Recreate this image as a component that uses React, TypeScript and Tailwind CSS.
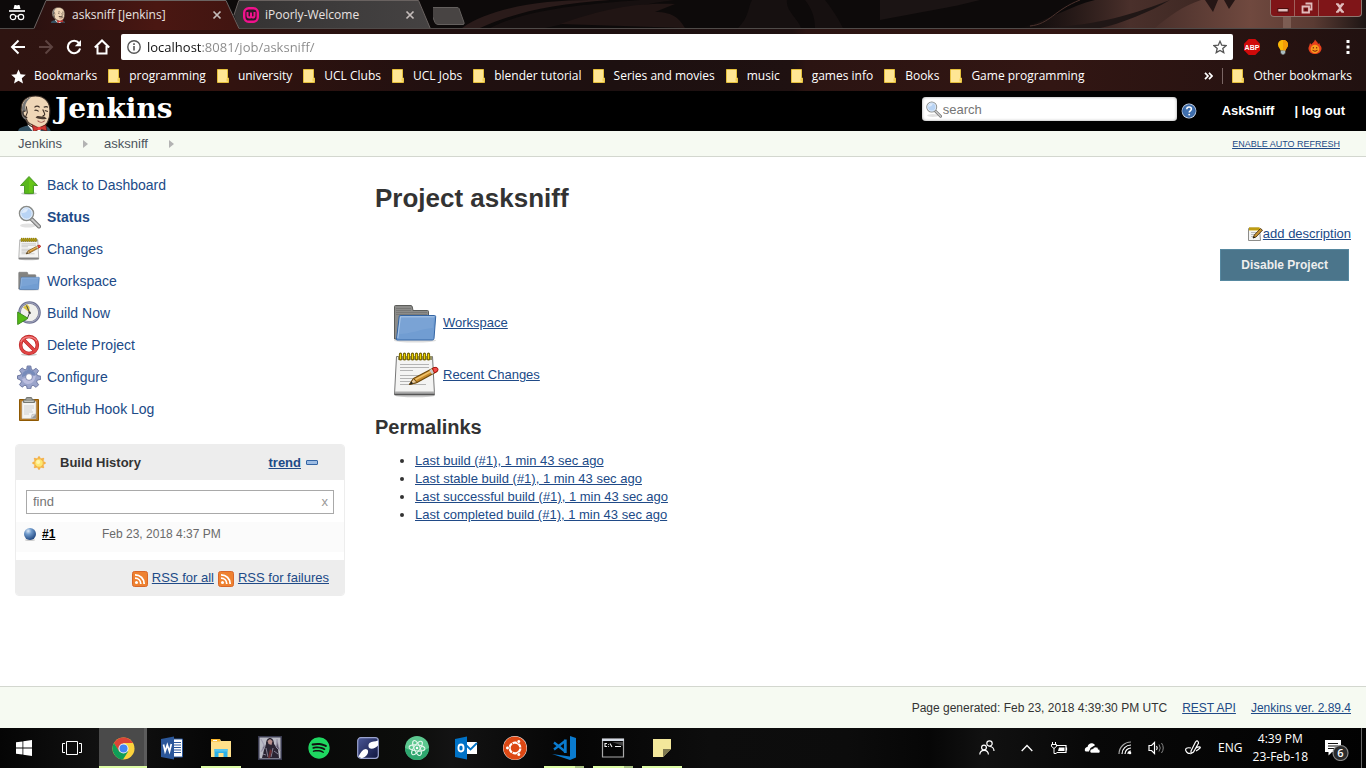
import React from "react";
import { FaSpotify, FaUbuntu } from "react-icons/fa";

const UI = "font-['Open_Sans','Noto_Sans',sans-serif]";

/* ---------- Jenkins page icons ---------- */

function Butler({ className }: { className: string }) {
  return (
    <svg viewBox="0 0 32 36" className={className} aria-hidden="true">
      <path d="M0 36c0-4 4-5 9-6l14-1c4 1 8 2 9 7z" fill="#335061" />
      <path d="M9 29l6 7h6l4-7z" fill="#fff" />
      <path d="M3 14C3 5 9 1 17 1c9 0 14 6 14 14 0 9-3 15-9 17-8 1-13-3-15-9-3-1-4-5-4-9z" fill="#efd6b7" stroke="#3b2e26" strokeWidth="1" />
      <path d="M4 15c-1-6 3-12 9-13-4 3-6 6-6 10l1 4c-2-1-3 1-2 3 0 2 2 3 3 3l-2 2c-3-2-4-5-3-9z" fill="#777" />
      <path d="M7 16c-2-1-3 0-2 3 1 2 2 3 4 3M8 11l1 6-2 5M8 23c1 3 3 5 6 6" fill="none" stroke="#3b2e26" strokeWidth="1" />
      <path d="M16 12c2-2 4-1 5 0M25 12c2-1 3-1 4 0M16 15c2-1 3 0 4 1M26 15l3 1M24 14c2 4 3 6 0 6" fill="none" stroke="#3b2e26" strokeWidth="1.1" />
      <path d="M17 22c2-3 4-1 6-1 2-1 3 0 5 2-3 1-8 1-11-1z" fill="#4a3a30" />
      <path d="M19 25c2 2 5 2 7 0" fill="none" stroke="#a0544d" strokeWidth="1" />
      <path d="M14 29l6 3 7-3 1 6-7-2-6 3z" fill="#d33833" stroke="#601310" strokeWidth=".7" />
      <path d="M19 31h3v3h-3z" fill="#ef3d3a" />
    </svg>
  );
}

function ArrowUp() {
  return (
    <svg viewBox="0 0 24 24" className="size-6" aria-hidden="true">
      <ellipse cx="12" cy="20.500" rx="8" ry="1.500" fill="#ccc" />
      <path d="M12 3.500L20.500 12.500H16.500V20.500H7.500V12.500H3.500Z" fill="#59b81c" stroke="#4e9a2a" strokeLinejoin="round" />
      <path d="M12 5l6.300 6.500h-2.800v8h-3.500z" fill="#73d216" opacity=".55" />
    </svg>
  );
}

function Magnifier({ className }: { className: string }) {
  return (
    <svg viewBox="0 0 24 24" className={className} aria-hidden="true">
      <ellipse cx="11" cy="20.500" rx="8" ry="2" fill="#e2e2e2" />
      <path d="M14.500 14l7.500 7.500" stroke="#777" strokeWidth="4" strokeLinecap="round" />
      <path d="M15 14.500l7 7" stroke="#c9c9c9" strokeWidth="2" strokeLinecap="round" />
      <circle cx="9.500" cy="8.500" r="7" fill="#a9c9ef" stroke="#8b8d89" strokeWidth="1.500" />
      <circle cx="9.500" cy="8.500" r="5.700" fill="#b9d4f4" stroke="#eef4fc" strokeWidth="1" />
      <path d="M5 8c0-3 3-5 6-4-1 3-3 4-6 4z" fill="#dfebfa" />
    </svg>
  );
}

function Notepad({ className }: { className: string }) {
  return (
    <svg viewBox="0 0 48 48" className={className} aria-hidden="true">
      <ellipse cx="24" cy="44.500" rx="20" ry="1.800" fill="#ccc" />
      <path d="M5.500 5.500h36l2 38h-40z" fill="#f4f4f3" stroke="#777" />
      <path d="M4 40.500h39.500v3H4z" fill="#aaa" />
      <path d="M3.500 43.500h40" stroke="#555" strokeWidth="1.400" />
      <path d="M7 5h34v4H7z" fill="#999567" />
      <path d="M9.500 3v5M13.500 3v5M17.500 3v5M21.500 3v5M25.500 3v5M29.500 3v5M33.500 3v5M37.500 3v5" stroke="#736000" strokeWidth="3.200" strokeLinecap="round" />
      <path d="M9.500 3.500v4M13.500 3.500v4M17.500 3.500v4M21.500 3.500v4M25.500 3.500v4M29.500 3.500v4M33.500 3.500v4M37.500 3.500v4" stroke="#edd400" strokeWidth="1.300" strokeLinecap="round" />
      <path d="M9 13.500h29M9 16.500h29M9 19.500h13M9 24.500h29M9 27.500h20M9 30.500h12M9 33.500h26" stroke="#b4b4b4" strokeWidth="1.200" />
      <g transform="translate(1.500 -1)">
        <path d="M17 34.500l4-6 20-10.500c3-1 5 1 3.500 3.500L24.500 32.500z" fill="#c98c2c" stroke="#6f4a0c" strokeWidth="1.200" strokeLinejoin="round" />
        <path d="M23 29.500l17-9" stroke="#efc26a" strokeWidth="1.600" />
        <path d="M17 34.500l4-6 3.500 4z" fill="#e9c99a" stroke="#6f4a0c" strokeWidth="1" />
        <path d="M17 34.500l2-3 1.600 2z" fill="#222" />
        <path d="M38 19.500l2.500 4" stroke="#ccc" strokeWidth="2.400" />
        <path d="M40 18.300c3-2 7-.5 5 2.700l-3 2z" fill="#ef4b4b" stroke="#a00" strokeWidth=".8" />
      </g>
    </svg>
  );
}

function SmallNotepad() {
  return (
    <svg viewBox="0 0 16 16" className="mt-px size-4" aria-hidden="true">
      <path d="M1.500 2.500h11l1 12h-12z" fill="#f3f3f3" stroke="#8d8d8a" />
      <path d="M2 1.500h11v3H2z" fill="#d9b21c" />
      <path d="M3 1v3M5 1v3M7 1v3M9 1v3M11 1v3" stroke="#8f7500" strokeWidth=".7" />
      <path d="M4 6.500h6M4 8.500h4M4 10.500h3" stroke="#bbb" />
      <path d="M6 12l1.300-3L13.500 2.500l2 1.700L9 11z" fill="#c99435" stroke="#4a3310" strokeWidth=".9" strokeLinejoin="round" />
      <path d="M6 12.300l1-2 1.200 1.200z" fill="#111" />
    </svg>
  );
}

function Folder({ className }: { className: string }) {
  return (
    <svg viewBox="0 0 48 48" className={className} aria-hidden="true">
      <ellipse cx="24" cy="41.500" rx="21" ry="2" fill="#ddd" />
      <path d="M3.500 40V7.500q0-1 1-1H20q1 0 1.300 1.500l.7 3.500h14.500q1 0 1 1V40z" fill="#8c8c8a" stroke="#5c5d5a" />
      <path d="M5 9.500h15M5 11.500h15M5 13.500h31M5 15.500h31" stroke="#787876" strokeWidth="1" />
      <path d="M5.500 40L8.200 17.500q0-1 1-1h34.300q1.200 0 1.200 1.200L43 39.500q-.2 1.500-1.700 1.500H6q-1 0-.5-1z" fill="#719dd2" stroke="#3465a4" />
      <path d="M9.500 18h33.500L41.800 29C30 30 20 35 7.800 35z" fill="#8fb3dd" opacity=".3" />
      <path d="M6.800 39L9.400 17.800h34" fill="none" stroke="#b7cfeb" strokeWidth=".9" />
    </svg>
  );
}

function BuildClock() {
  return (
    <svg viewBox="0 0 24 24" className="size-6" aria-hidden="true">
      <circle cx="12.500" cy="11.500" r="10" fill="#f0f0ec" stroke="#6f7392" strokeWidth="2.600" />
      <circle cx="12.500" cy="11.500" r="9.800" fill="none" stroke="#b4b7cb" strokeWidth=".8" />
      <path d="M12.500 11.500L6 6.500l4-3.500 2.500 3z" fill="#dcc443" />
      <path d="M9.500 4.500l3 7 1.500 1M12.500 12l-2 5" stroke="#444" strokeWidth="1" fill="none" />
      <circle cx="12.500" cy="11.500" r="1.100" fill="#333" />
      <path d="M.7 11v12.500L11 17.300z" fill="#54bb14" stroke="#3f8b20" strokeWidth="1" strokeLinejoin="round" />
    </svg>
  );
}

function Prohibit() {
  return (
    <svg viewBox="0 0 24 24" className="size-6" aria-hidden="true">
      <ellipse cx="12" cy="21.500" rx="8" ry="1.500" fill="#ccc" />
      <circle cx="12" cy="12" r="8.400" fill="#fff" stroke="#b92222" strokeWidth="3.500" />
      <circle cx="12" cy="12" r="8.400" fill="none" stroke="#e14545" strokeWidth="2.300" />
      <path d="M7 7l10 10" stroke="#b92222" strokeWidth="3.400" />
      <path d="M6.300 6.300l11.400 11.400" stroke="#e14545" strokeWidth="2.200" />
      <path d="M3.800 9c1.200-3 4-5 8.200-5 3 0 6 1 8 4" fill="none" stroke="#f18a8a" strokeWidth="1.200" />
    </svg>
  );
}

function Gear() {
  return (
    <svg viewBox="0 0 24 24" className="size-6" aria-hidden="true">
      <path d="M10.200 1h3.600l.6 3.500 1.700.8 3-2 2.500 2.500-2 3 .8 1.800 3.300.6v3.200l-3.300.7-.8 1.800 2 2.900-2.500 2.500-3-2-1.700.8-.6 2.700h-3.600l-.6-2.900-1.700-.7-2.900 2-2.500-2.500 2-2.900-.8-1.700L.5 13.800v-3l3.200-.7.800-1.800-2-2.900L5 2.900l3 2 1.700-.7z" fill="#9aa4cb" stroke="#65719c" strokeWidth=".9" strokeLinejoin="round" />
      <path d="M10.800 2h2.400l.5 3.300C17 6 18.500 8 19 11c-5-2-9-1-14 1C5 8 7 6 10.300 5.300z" fill="#6b83b4" opacity=".75" />
      <path d="M5 14c4-2 9-1 14-4-1 6-4 9-8 9-3 0-5-2-6-5z" fill="#c3c4e4" opacity=".8" />
      <circle cx="12" cy="12" r="3.400" fill="#fff" stroke="#6c76a4" strokeWidth=".8" />
    </svg>
  );
}

function Clipboard() {
  return (
    <svg viewBox="0 0 24 24" className="size-6" aria-hidden="true">
      <path d="M2.500 2.500h19v21h-19z" fill="#b57a28" stroke="#8f5902" />
      <path d="M5 4.500h14v17H5z" fill="#f4f4f4" stroke="#c8c8c8" strokeWidth=".6" />
      <path d="M7 9h10M7 11h10M7 13h8M7 15h9M7 17h5" stroke="#cfcfcf" strokeWidth="1.200" />
      <path d="M19 17l-5 4.500h5z" fill="#999" />
      <path d="M14 21.500l1-4 4-.5z" fill="#ddd" stroke="#aaa" strokeWidth=".5" />
      <path d="M6.500 5.500V3.500q0-1 1-1H9V1.500q0-1 1-1h4q1 0 1 1v1h1.500q1 0 1 1v2z" fill="#9a9c97" stroke="#6d6f6a" strokeWidth=".9" />
      <path d="M7.500 4.500h9" stroke="#cfd0cd" strokeWidth=".8" />
    </svg>
  );
}

function Sun() {
  const rays = [0, 45, 90, 135, 180, 225, 270, 315];
  return (
    <svg viewBox="0 0 16 16" className="size-4" aria-hidden="true">
      {rays.map((a) => (
        <path key={a} d="M6.300 3.500L8 1l1.700 2.500z" fill="#f9b13a" stroke="#efa33a" strokeWidth=".3" transform={`rotate(${a} 8 8)`} />
      ))}
      <circle cx="8" cy="8" r="4.300" fill="#fde873" stroke="#f5b03e" />
      <circle cx="7.200" cy="7" r="2" fill="#fff6b0" />
    </svg>
  );
}

function BlueBall() {
  return (
    <svg viewBox="0 0 16 16" className="size-4" aria-hidden="true">
      <defs>
        <radialGradient id="ball" cx=".35" cy=".25" r=".8">
          <stop offset="0" stopColor="#dce8f6" />
          <stop offset=".35" stopColor="#6f9acb" />
          <stop offset="1" stopColor="#1c427c" />
        </radialGradient>
      </defs>
      <ellipse cx="8" cy="14" rx="5" ry="1" fill="#ccc" />
      <circle cx="8" cy="8" r="6" fill="url(#ball)" />
    </svg>
  );
}

function Rss() {
  return (
    <svg viewBox="0 0 16 16" className="mt-[2px] size-4" aria-hidden="true">
      <rect x=".5" y=".5" width="15" height="15" rx="2" fill="#ee8130" stroke="#d8672a" />
      <circle cx="4.500" cy="11.500" r="1.500" fill="#fff" />
      <path d="M3 7.200c3.300 0 5.800 2.500 5.800 5.800M3 3.800c5.200 0 9.200 4 9.200 9.200" fill="none" stroke="#fff" strokeWidth="1.800" />
    </svg>
  );
}

function HelpIcon() {
  return (
    <svg viewBox="0 0 16 16" className="size-4" aria-hidden="true">
      <circle cx="8" cy="8" r="7.400" fill="#d8e3f2" />
      <circle cx="8" cy="8" r="6.200" fill="#3f6fae" stroke="#2d5b9b" />
      <path d="M5.800 6.300c0-1.500 1-2.200 2.300-2.200s2.300.8 2.300 2c0 1.700-2.200 1.700-2.200 3.400" fill="none" stroke="#fff" strokeWidth="1.500" />
      <circle cx="8.200" cy="11.600" r=".95" fill="#fff" />
    </svg>
  );
}

/* ---------- Browser window ---------- */

function ThemeArt() {
  return (
    <svg viewBox="0 0 1366 91" preserveAspectRatio="none" className="pointer-events-none absolute inset-0 size-full" aria-hidden="true">
      <defs>
        <linearGradient id="bar" x1="0" x2="1" y1="0" y2="0">
          <stop offset="0" stopColor="#2e1411" />
          <stop offset=".17" stopColor="#32130f" />
          <stop offset=".32" stopColor="#211010" />
          <stop offset=".45" stopColor="#1d1010" />
          <stop offset=".58" stopColor="#1f1111" />
          <stop offset=".59" stopColor="#2b1412" />
          <stop offset=".77" stopColor="#321613" />
          <stop offset="1" stopColor="#211110" />
        </linearGradient>
        <linearGradient id="glow" x1="0" x2="1" y1="0" y2="0">
          <stop offset="0" stopColor="#3a2522" stopOpacity="0" />
          <stop offset=".5" stopColor="#4a302b" />
          <stop offset="1" stopColor="#38241f" />
        </linearGradient>
        <linearGradient id="glow2" x1="0" x2="1" y1="0" y2="0">
          <stop offset="0" stopColor="#4a302b" />
          <stop offset=".45" stopColor="#70493f" />
          <stop offset=".75" stopColor="#5a3b33" />
          <stop offset="1" stopColor="#1d1514" />
        </linearGradient>
      </defs>
      <path d="M0 0h1366v91H0z" fill="url(#bar)" />
      <path d="M0 0h1366v28H0z" fill="#0d0a0a" />
      <path d="M462 28C490 8 540 0 590 0h20c-60 4-100 14-130 28z" fill="#2a1b1a" />
      <path d="M490 28C530 8 590 4 640 0h35c-50 6-90 20-130 28z" fill="#171010" />
      <path d="M560 24c35-12 70-22 115-20l-20 8c20 0 25 8 30 16z" fill="#211514" />
      <path d="M738 28c12-12 10-22 14-28h35c-2 10 12 20 14 28zM815 28c0-12-4-20-10-28h20c8 10 14 20 18 28z" fill="#161010" />
      <path d="M880 0h100c-30 8-60 12-100 20z" fill="#1b1414" />
      <path d="M1020 28c30-8 50-22 75-28h145c-30 8-60 12-80 28z" fill="url(#glow)" />
      <path d="M1155 28c14-12 28-22 46-28h165v28z" fill="url(#glow2)" />
      <path d="M1040 28c50-2 84-10 130-28-20 12-50 24-70 28z" fill="#201716" />
      <path d="M1030 26c20-2 24-16 50-26" stroke="#4c322d" fill="none" />
      <path d="M1205 0l8 12 5-12zM1224 0l5 9 6-9z" fill="#251615" />
      <path d="M1283 17h8v11h-8z" fill="#87695f" opacity=".7" />
      <path d="M0 28.500h1366" stroke="#4f4b49" />
    </svg>
  );
}

type TabProps = { title: string; active?: boolean; icon: React.ReactNode; className: string };

function Tab({ title, active, icon, className }: TabProps) {
  return (
    <div className={`relative flex h-[30px] items-center pr-[15px] ${className}`}>
      <svg viewBox="0 0 207 30" preserveAspectRatio="none" className="absolute inset-0 size-full" aria-hidden="true">
        <defs>
          <linearGradient id="tabOn" x1="0" x2="1">
            <stop offset="0" stopColor="#2a1110" />
            <stop offset=".6" stopColor="#4a1712" />
            <stop offset="1" stopColor="#411511" />
          </linearGradient>
          <linearGradient id="tabOff" x1="0" x2="1">
            <stop offset="0" stopColor="#343232" />
            <stop offset=".6" stopColor="#3f3d3d" />
            <stop offset="1" stopColor="#454242" />
          </linearGradient>
        </defs>
        <path d={active ? "M0 30L1 28 13 1H193L206 28V30Z" : "M6 28L1 15 6 1H192L204 28Z"} fill={active ? "url(#tabOn)" : "url(#tabOff)"} />
        <path d={active ? "M1 28.500L13 .5H193L206 28.500" : "M1 15L6 .5H192L204 28"} fill="none" stroke="#6b6462" />
      </svg>
      <span className="relative flex size-4 shrink-0 items-center justify-center">{icon}</span>
      <span className="relative ml-[6px] min-w-0 grow truncate text-xs text-[#e8e2e0]">{title}</span>
      <button aria-label={`Close ${title}`} className="relative flex size-4 items-center justify-center">
        <svg viewBox="0 0 10 10" className="size-[10px]" aria-hidden="true">
          <path d="M1.500 1.500l7 7M8.500 1.500l-7 7" stroke="#c4bcba" strokeWidth="1.700" />
        </svg>
      </button>
    </div>
  );
}

function BookmarkFolder() {
  return (
    <svg viewBox="0 0 12 14" className="h-[14px] w-3 shrink-0" aria-hidden="true">
      <path d="M.5.500h10v8.500h1v4.500H.5z" fill="#ffe694" stroke="#e5c03c" />
      <path d="M9.500 9.500v3h2v-3z" fill="#f2cf52" />
    </svg>
  );
}

const bookmarks = ["programming", "university", "UCL Clubs", "UCL Jobs", "blender tutorial", "Series and movies", "music", "games info", "Books", "Game programming"];

function NavButton({ label, d, dim }: { label: string; d: string; dim?: boolean }) {
  return (
    <button aria-label={label} className="flex w-7 justify-center">
      <svg viewBox="0 0 16 16" className={dim ? "size-4 text-[#5d4340]" : "size-4 text-white"} aria-hidden="true">
        <path d={d} fill="none" stroke="currentColor" strokeWidth="2" />
      </svg>
    </button>
  );
}

function BrowserChrome() {
  return (
    <div className={`relative shrink-0 ${UI}`}>
      <ThemeArt />
      <div className="relative flex h-[30px]">
        <div className="flex w-[33px] shrink-0 justify-center pt-1">
          <svg viewBox="0 0 16 18" className="h-[18px] w-4" aria-hidden="true">
            <path d="M4.500 5L5.500 1h1.300L8 1.500 9.200 1h1.300l1 4z" fill="#fff" />
            <path d="M0 7h16" stroke="#fff" strokeWidth="1.600" />
            <circle cx="4" cy="13" r="2.700" fill="none" stroke="#fff" strokeWidth="1.200" />
            <circle cx="12" cy="13" r="2.700" fill="none" stroke="#fff" strokeWidth="1.200" />
            <path d="M6.500 12.500q1.500-1 3 0" stroke="#fff" fill="none" strokeWidth="1.100" />
          </svg>
        </div>
        <Tab active title="asksniff [Jenkins]" icon={<Butler className="size-4" />} className="z-10 w-[207px] pl-[17px]" />
        <Tab
          title="iPoorly-Welcome"
          className="-ml-[7px] w-[200px] pl-[10px]"
          icon={
            <svg viewBox="0 0 16 16" className="size-4" aria-hidden="true">
              <rect x="1.200" y="1.200" width="13.600" height="13.600" rx="4.500" fill="#2c1a26" stroke="#f0128c" strokeWidth="2.400" />
              <path d="M4.500 5v3.500q0 2 1.800 2T8 8.500V5.500M8 8.500q0 2 1.800 2t1.700-2V5" fill="none" stroke="#f0128c" strokeWidth="2" />
            </svg>
          }
        />
        <button aria-label="New tab" className="mt-[7px] h-[18px] w-9">
          <svg viewBox="0 0 36 18" className="h-[18px] w-9" aria-hidden="true">
            <path d="M-3 1q0-.5 1-.5H25q1.500 0 2 1l5 14q.5 2-1 2H6q-2 0-3-2z" transform="translate(-1)" fill="#484443" stroke="#64605e" />
          </svg>
        </button>
        <div className="mr-1 ml-auto flex h-[17px] rounded-b-sm border border-t-0 border-[#8d7770] bg-[#7f1518]">
          <button aria-label="Minimize" className="flex w-6 items-center justify-center border-r border-[#a0605c]">
            <svg viewBox="0 0 12 12" className="size-3" aria-hidden="true"><rect x=".8" y="6.500" width="10.400" height="3.500" fill="#e0bcbc" stroke="#4b0c0d" /></svg>
          </button>
          <button aria-label="Restore" className="flex w-6 items-center justify-center border-r border-[#a0605c]">
            <svg viewBox="0 0 12 12" className="size-3" aria-hidden="true">
              <path d="M4.500 1.500h6v6h-2M1.500 4.500h6.500v6H1.500z" fill="none" stroke="#e0bcbc" strokeWidth="1.800" />
              <path d="M3.700 6.700h2v2h-2z" fill="#4b0c0d" />
            </svg>
          </button>
          <button aria-label="Close window" className="flex w-[42px] items-center justify-center">
            <svg viewBox="0 0 12 12" className="size-3" aria-hidden="true"><path d="M2 2h2l2 2.500L8 2h2M2 10h2l2-2.500L8 10h2M3 2l6 8M9 2L3 10" stroke="#e0bcbc" strokeWidth="1.700" fill="none" /></svg>
          </button>
        </div>
      </div>

      <div className="relative flex h-[30px] items-center pt-1 pl-1">
        <NavButton label="Back" d="M15 8H2.500M8.500 1.500L2 8l6.500 6.500" />
        <NavButton label="Forward" dim d="M1 8h12.500M7.500 1.500L14 8l-6.500 6.500" />
        <button aria-label="Reload" className="flex w-7 justify-center">
          <svg viewBox="0 0 16 16" className="size-4" aria-hidden="true">
            <path d="M13 4.200A6.200 6.200 0 1 0 14.100 9.500" fill="none" stroke="#fff" strokeWidth="2.100" />
            <path d="M15 1v6.200H8.800z" fill="#fff" />
          </svg>
        </button>
        <NavButton label="Home" d="M.8 8.500L8 1.500l7.200 7M3.500 7v7.500h9V7" />
        <div className="ml-[5px] flex h-[26px] min-w-0 grow items-center rounded-xs bg-white px-[6px]">
          <svg viewBox="0 0 14 14" className="size-[14px] shrink-0" aria-hidden="true">
            <circle cx="7" cy="7" r="6.200" fill="none" stroke="#555" strokeWidth="1.400" />
            <path d="M7 6v4.500M7 3.300v1.600" stroke="#555" strokeWidth="1.600" />
          </svg>
          <input
            aria-label="Address"
            defaultValue="localhost:8081/job/asksniff/"
            className="ml-[6px] h-6 min-w-0 grow bg-[linear-gradient(90deg,#111_54px,#888_54px)] bg-clip-text text-[13px] text-transparent outline-none"
          />
          <svg viewBox="0 0 16 16" className="size-[14px] shrink-0" aria-hidden="true">
            <path d="M8 1.500l2 4.500 4.900.4-3.700 3.200 1.100 4.800L8 11.900l-4.300 2.500 1.100-4.800L1.100 6.400 6 6z" fill="none" stroke="#555" strokeWidth="1.500" />
          </svg>
        </div>
        <div className="flex shrink-0 items-center">
          <button aria-label="Adblock Plus" className="flex w-9 justify-center pl-[2px]">
            <svg viewBox="0 0 16 16" className="size-4" aria-hidden="true">
              <path d="M4.700 0h6.600L16 4.700v6.600L11.300 16H4.700L0 11.300V4.700z" fill="#d00a0a" />
              <text x="8" y="10.600" textAnchor="middle" fontSize="7" fontWeight="700" fill="#fff" fontFamily="Liberation Sans, sans-serif">ABP</text>
            </svg>
          </button>
          <button aria-label="Lightbulb" className="flex w-7 justify-center">
            <svg viewBox="0 0 16 16" className="size-4" aria-hidden="true">
              <path d="M8 1c3 0 5 2 5 4.700C13 8.500 11 9 10.500 11.500h-5C5 9 3 8.500 3 5.700 3 3 5 1 8 1z" fill="#fbb708" />
              <path d="M8 1c3 0 5 2 5 4.700C13 8.500 11 9 10.500 11.500H8z" fill="#f59d07" />
              <path d="M5.700 11.500h4.600v3H9.300v1H6.700v-1h-1z" fill="#a9bcc0" />
            </svg>
          </button>
          <button aria-label="Flame" className="flex w-9 justify-center">
            <svg viewBox="0 0 16 16" className="size-4" aria-hidden="true">
              <path d="M8 .5c1 2 3 2.500 3 4.500l1.500-1C12 6 15 7 14.500 10c-.5 3-3 5-6.500 5s-6-2-6.500-5C1.200 8 2.500 7 3 4l1.500 1.500C5 4 7.500 3 8 .5z" fill="#e8401c" />
              <circle cx="8" cy="10" r="4.300" fill="#f99b1d" />
              <path d="M6.300 8v1.500M9.700 8v1.500M5.500 11.300q2.500 2 5 0" stroke="#7d1b06" fill="none" />
            </svg>
          </button>
          <button aria-label="Menu" className="flex w-[33px] justify-center pr-[3px]">
            <svg viewBox="0 0 4 14" className="h-[14px] w-1" aria-hidden="true"><path d="M.5 0h3v3h-3zM.5 5.500h3v3h-3zM.5 11h3v3h-3z" fill="#fff" /></svg>
          </button>
        </div>
      </div>

      <nav aria-label="Bookmarks" className="relative flex h-[31px] items-center pt-px pr-[14px] pl-[11px] text-xs whitespace-nowrap text-white">
        <a href="#bookmarks" className="flex items-center gap-2">
          <svg viewBox="0 0 16 16" className="size-[15px]" aria-hidden="true"><path d="M8 .5l2.200 5.200 5.600.5-4.300 3.700 1.300 5.500L8 12.500l-4.800 2.900 1.300-5.500L.2 6.200l5.600-.5z" fill="#fff" /></svg>
          Bookmarks
        </a>
        {bookmarks.map((b) => (
          <a key={b} href="#folder" className="ml-[11px] flex items-center gap-[9px]">
            <BookmarkFolder />
            {b}
          </a>
        ))}
        <button aria-label="More bookmarks" className="ml-auto">
          <svg viewBox="0 0 9 8" className="h-2 w-[9px]" aria-hidden="true"><path d="M1 .8L4 4 1 7.200M5 .8L8 4 5 7.200" fill="none" stroke="#fff" strokeWidth="1.700" /></svg>
        </button>
        <span className="mx-[9px] h-4 w-px bg-[#7a6664]" />
        <a href="#other" className="flex items-center gap-[9px]">
          <BookmarkFolder />
          Other bookmarks
        </a>
      </nav>
    </div>
  );
}

/* ---------- Jenkins page ---------- */

const link = "text-[#204a87] underline";

const tasks: { label: string; icon: React.ReactNode }[] = [
  { label: "Back to Dashboard", icon: <ArrowUp /> },
  { label: "Status", icon: <Magnifier className="size-6" /> },
  { label: "Changes", icon: <Notepad className="size-6" /> },
  { label: "Workspace", icon: <Folder className="size-6" /> },
  { label: "Build Now", icon: <BuildClock /> },
  { label: "Delete Project", icon: <Prohibit /> },
  { label: "Configure", icon: <Gear /> },
  { label: "GitHub Hook Log", icon: <Clipboard /> },
];

const permalinks = [
  "Last build (#1), 1 min 43 sec ago",
  "Last stable build (#1), 1 min 43 sec ago",
  "Last successful build (#1), 1 min 43 sec ago",
  "Last completed build (#1), 1 min 43 sec ago",
];

function JenkinsHeader() {
  return (
    <header className="flex h-10 shrink-0 items-center bg-black pr-[21px] pl-[18px] text-[13px] font-bold text-white">
      <a href="#home" className="flex h-10 items-start overflow-hidden">
        <Butler className="mt-1 h-[37px] w-[33px]" />
        <span className="ml-1 font-['DejaVu_Serif',serif] text-[28px] leading-9">Jenkins</span>
      </a>
      <div className="mb-1 ml-auto flex h-6 w-[255px] items-center rounded-sm bg-white pl-[3px] shadow-[inset_0_0_3px_#999]">
        <Magnifier className="size-[17px]" />
        <input aria-label="Search" placeholder="search" className="ml-px h-6 min-w-0 grow font-normal text-[#333] outline-none placeholder:text-[#757575]" />
      </div>
      <a href="#help" aria-label="Help" className="ml-1"><HelpIcon /></a>
      <a href="#user" className="ml-[25px]">AskSniff</a>
      <span className="ml-5">| <a href="#logout">log out</a></span>
    </header>
  );
}

function Crumb({ children }: { children: string }) {
  return (
    <li className="flex items-center">
      <a href="#crumb" className="text-[#4d545d]">{children}</a>
      <svg viewBox="0 0 5 8" className="mr-4 ml-[21px] h-2 w-[5px]" aria-hidden="true"><path d="M0 0l5 4-5 4z" fill="#b3b3b3" /></svg>
    </li>
  );
}

function Sidebar() {
  return (
    <aside className="w-[330px] shrink-0 pt-3">
      <ul>
        {tasks.map((t) => (
          <li key={t.label} className="flex h-8 items-center gap-[6px] pl-[2px]">
            {t.icon}
            <a href="#task" className={t.label === "Status" ? "text-sm font-bold text-[#204a87]" : "text-sm text-[#204a87]"}>{t.label}</a>
          </li>
        ))}
      </ul>
      <section className="mt-[19px] overflow-hidden rounded-[4px] border border-[#ededed]">
        <div className="flex h-[35px] items-center bg-[#ededed] pr-[26px] pl-[15px] font-bold">
          <Sun />
          <h2 className="ml-[13px]">Build History</h2>
          <a href="#trend" className={`ml-auto ${link}`}>trend</a>
          <button aria-label="Collapse" className="ml-[5px] h-[5px] w-3 rounded-[1px] border border-[#3465a4] bg-[#9dbce3]" />
        </div>
        <div className="mx-[10px] mt-[10px] flex h-6 items-center border border-[#a9a9a9] pr-[5px] pl-[6px]">
          <input aria-label="Find builds" placeholder="find" className="min-w-0 grow outline-none placeholder:text-[#757575]" />
          <button aria-label="Clear" className="text-[#999]">x</button>
        </div>
        <table className="mt-2 mb-2 w-full bg-[#fbfbfb] text-xs">
          <tbody>
            <tr className="h-[30px] align-top">
              <td className="w-[86px] pt-1 pl-[6px]">
                <div className="flex items-center gap-1"><BlueBall /><a href="#build" className="font-bold text-black underline">#1</a></div>
              </td>
              <td className="pt-1 text-[#6a6a6a]">Feb 23, 2018 4:37 PM</td>
            </tr>
          </tbody>
        </table>
        <div className="flex h-[35px] items-center justify-end gap-1 bg-[#ededed] pr-[15px]">
          <Rss /><a href="#rss" className={link}>RSS for all</a>
          <Rss /><a href="#rssf" className={link}>RSS for failures</a>
        </div>
      </section>
    </aside>
  );
}

function Main() {
  return (
    <main className="min-w-0 grow pt-[26px]">
      <h1 className="text-[26px] leading-[30px] font-bold">Project asksniff</h1>
      <div className="mt-3 flex justify-end">
        <SmallNotepad />
        <a href="#describe" className={link}>add description</a>
      </div>
      <div className="mt-[6px] flex justify-end pr-[2px]">
        <button className="h-8 border border-[#5688a0] bg-[#4b758b] px-5 text-xs font-bold text-[#eee]">Disable Project</button>
      </div>
      <ul className="mt-4 ml-4">
        <li className="flex h-[52px] items-center gap-1"><Folder className="size-12" /><a href="#ws" className={link}>Workspace</a></li>
        <li className="flex h-[52px] items-center gap-1"><Notepad className="size-12" /><a href="#changes" className={link}>Recent Changes</a></li>
      </ul>
      <h2 className="mt-[14px] text-xl leading-6 font-bold">Permalinks</h2>
      <ul className="mt-[13px] list-disc pl-10">
        {permalinks.map((p) => (
          <li key={p}><a href="#permalink" className={link}>{p}</a></li>
        ))}
      </ul>
    </main>
  );
}

/* ---------- Taskbar ---------- */

type TaskButtonProps = { label: string; active?: boolean; open?: boolean; stacked?: boolean; children: React.ReactNode };

function TaskButton({ label, active, open, stacked, children }: TaskButtonProps) {
  return (
    <button aria-label={label} className={`relative flex h-10 w-12 shrink-0 items-center justify-center ${active ? "border-r-[3px] border-[#5c5c5c] bg-[#4a4a4a] pl-[3px]" : ""}`}>
      {children}
      {active && <span className="absolute bottom-0 left-0 h-[2px] w-12 bg-[#dcfba4]" />}
      {open && (
        <span className="absolute bottom-0 flex h-[2px] w-10 justify-end bg-[#dcfba4]">
          {stacked && <span className="h-[2px] w-[9px] bg-[#a6bf80]" />}
        </span>
      )}
    </button>
  );
}

function Taskbar() {
  return (
    <footer className={`flex h-10 shrink-0 items-center bg-[linear-gradient(90deg,#050505,#121212_8%,#060606_16%,#0c0d0b_30%,#131313_33%,#050505_42%,#0d0d0d_52%,#0c0c0c_62%,#060606_68%,#111_72%,#080808_80%,#020202)] text-white ${UI}`}>
      <TaskButton label="Start">
        <svg viewBox="0 0 16 16" className="size-4" aria-hidden="true"><path d="M0 2.300L6.500 1.400v6.200H0zM7.300 1.300L16 0v7.600H7.300zM0 8.400h6.500v6.200L0 13.700zM7.300 8.400H16V16l-8.700-1.300z" fill="#fff" /></svg>
      </TaskButton>
      <TaskButton label="Task view">
        <svg viewBox="0 0 20 14" className="h-[14px] w-5" aria-hidden="true"><path d="M4.500.5h11v13h-11zM3 2.500H.5v9H3M17 2.500h2.500v9H17" fill="none" stroke="#fff" /></svg>
      </TaskButton>
      <div className="ml-[3px] flex gap-px">
        <TaskButton label="Chrome" active>
          <svg viewBox="0 0 24 24" className="size-[23px]" aria-hidden="true">
            <circle cx="12" cy="12" r="11.500" fill="#fbd23c" />
            <path d="M2 6.300A11.500 11.500 0 0 1 22 6.300H12L7 15z" fill="#db4437" />
            <path d="M2 6.300A11.500 11.500 0 0 0 11.500 23.500L17 14.800 7.500 15z" fill="#0f9d58" />
            <circle cx="12" cy="12" r="5.300" fill="#f1f1f1" /><circle cx="12" cy="12" r="4.200" fill="#4285f4" />
          </svg>
        </TaskButton>
        <TaskButton label="Word">
          <svg viewBox="0 0 24 24" className="size-6" aria-hidden="true">
            <path d="M11 3h11.500v18H11z" fill="#fff" stroke="#2b579a" />
            <path d="M14 6.500h7M14 9h7M14 11.500h7M14 14h7M14 16.500h7" stroke="#2b579a" strokeWidth="1.200" />
            <path d="M1 3l13-2.500v23L1 21z" fill="#2b579a" />
            <path d="M3.500 8.500l1.600 7 2.200-6.500 2.200 6.500 1.800-7.500" fill="none" stroke="#fff" strokeWidth="1.700" />
          </svg>
        </TaskButton>
        <TaskButton label="File Explorer" open>
          <svg viewBox="0 0 24 24" className="size-6" aria-hidden="true">
            <path d="M2 3h9l1 2h10v16H2z" fill="#ffe08a" /><path d="M2 3h9v2.500H2z" fill="#f8b62d" /><path d="M4 4h4v1H4z" fill="#fff" />
            <path d="M5.500 21v-8h13v8h-4v-4h-5v4z" fill="#2cb1e8" />
            <path d="M5.500 13h13v2.500h-13z" fill="#52c4f0" />
          </svg>
        </TaskButton>
        <TaskButton label="Game">
          <svg viewBox="0 0 24 24" className="size-6" aria-hidden="true">
            <path d="M0 0h24v24H0z" fill="#38394d" /><path d="M1.500 1.500h21v21h-21z" fill="#b9bac4" />
            <path d="M8 8c0-4 2-6 4-6s4 2 4 6l4 5 1 9H4l2-8z" fill="#2a2432" />
            <path d="M9.500 5l2.500-2 2.500 2-1 4-3-1z" fill="#b68e8b" />
            <path d="M3 3l3 6-3 7 4-5zM19 3l1 5 2 7-4-4zM8 12l2 9M15 12l-2 9M5 18l3 1M16 15l4 3" fill="#5d586c" stroke="#a09cae" strokeWidth=".8" />
            <path d="M12 13l2 2-2 7h-2z" fill="#6d3034" />
          </svg>
        </TaskButton>
        <TaskButton label="Spotify"><FaSpotify className="size-[22px] rounded-full bg-[#111] text-[#1ed760]" /></TaskButton>
        <TaskButton label="Remote tool">
          <svg viewBox="0 0 22 22" className="size-[22px]" aria-hidden="true">
            <defs><linearGradient id="navy" x1="0" y1="0" x2="1" y2="1"><stop offset="0" stopColor="#4a5796" /><stop offset="1" stopColor="#10163f" /></linearGradient></defs>
            <rect x=".7" y=".7" width="20.600" height="20.600" rx="3" fill="url(#navy)" stroke="#9ba4cf" strokeWidth="1.200" />
            <path d="M21 3.500v5c-2 2.500-5 3.500-8 3-2-1-2-4-.5-5.500C15 4 18 5 21 3.500zM1.500 19.500c2-4 4-7 7-7.500 3 0 3 3 2 5-1.500 2.500-4 4-6 4.200z" fill="#fff" />
          </svg>
        </TaskButton>
        <TaskButton label="Atom">
          <svg viewBox="0 0 24 24" className="size-6" aria-hidden="true">
            <circle cx="12" cy="12" r="12" fill="#5cc78f" /><path d="M0 12a12 12 0 0 0 24 0c-8 4-16 4-24 0z" fill="#2ea66e" />
            <g fill="none" stroke="#e4f6ec" strokeWidth="1">
              <ellipse cx="12" cy="12" rx="3" ry="8" transform="rotate(-24 12 12)" />
              <ellipse cx="12" cy="12" rx="3" ry="8" transform="rotate(36 12 12)" />
              <ellipse cx="12" cy="12" rx="3" ry="8" transform="rotate(96 12 12)" />
            </g>
            <circle cx="12" cy="12" r="1.200" fill="#fff" />
          </svg>
        </TaskButton>
        <TaskButton label="Outlook">
          <svg viewBox="0 0 24 24" className="size-6" aria-hidden="true">
            <path d="M12 6h11v12H12z" fill="#fff" /><path d="M12.500 9.500l4 4L23 7" fill="none" stroke="#0072c6" strokeWidth="1.800" />
            <path d="M1 3l12-2.500v23L1 21z" fill="#0072c6" />
            <ellipse cx="7" cy="12" rx="2.600" ry="3.500" fill="none" stroke="#fff" strokeWidth="1.800" />
          </svg>
        </TaskButton>
        <TaskButton label="Ubuntu"><span className="flex size-6 items-center justify-center rounded-full bg-white"><FaUbuntu className="size-6 text-[#dd4814]" /></span></TaskButton>
        <TaskButton label="Visual Studio Code" open stacked>
          <svg viewBox="0 0 24 24" className="size-6" aria-hidden="true">
            <path d="M18 0l6 2v19.500L18 24z" fill="#0a7bcf" />
            <path d="M0 18l18 2.500V24z" fill="#0a7bcf" />
            <path d="M2 6.500l10.500 8.500M2 13.500L12.500 5.500" stroke="#0a7bcf" strokeWidth="2.300" fill="none" />
            <path d="M13.300 3.500v13.500" stroke="#0a7bcf" strokeWidth="2.800" />
          </svg>
        </TaskButton>
        <TaskButton label="Command prompt" open stacked>
          <svg viewBox="0 0 24 20" className="h-5 w-6" aria-hidden="true">
            <path d="M1.500 1h21v18h-21z" fill="#050505" stroke="#a9a9a9" strokeWidth="1.200" /><path d="M1 .7h22V3H1z" fill="#d5dbe5" />
            <path d="M11 4h11v4z" fill="#444" />
            <path d="M6 5.500H4v3h2M7.500 6v.8M7.500 8v.8M9 5.500l2 3.500M14 8.500h6" fill="none" stroke="#eee" strokeWidth="1.100" />
          </svg>
        </TaskButton>
        <TaskButton label="Sticky Notes" open>
          <svg viewBox="0 0 18 18" className="size-[18px]" aria-hidden="true"><path d="M0 0h18v10l-8 8H0z" fill="#f3e79b" /><path d="M10 10h8l-8 8z" fill="#7d774f" /></svg>
        </TaskButton>
      </div>

      <div className="ml-auto flex h-10 items-center text-xs">
        <svg viewBox="0 0 16 16" className="size-4" aria-hidden="true"><g fill="none" stroke="#fff" strokeWidth="1.200"><circle cx="10.500" cy="3.500" r="2.700" /><path d="M15 11c0-3-2-4.500-4.500-4.500" /><circle cx="5" cy="7.500" r="2.400" /><path d="M.8 14.500c.2-5.500 8.400-5.500 8.600 0" /></g></svg>
        <svg viewBox="0 0 12 8" className="ml-[26px] h-2 w-3" aria-hidden="true"><path d="M.7 7L6 1.500 11.300 7" fill="none" stroke="#fff" strokeWidth="1.300" /></svg>
        <svg viewBox="0 0 17 14" className="ml-[18px] h-[14px] w-[17px]" aria-hidden="true"><path d="M5 4.500h10v7H5.500M15.500 6.500v3" fill="none" stroke="#fff" strokeWidth="1.200" /><path d="M8 6.500h5.500v3.500H7z" fill="#fff" /><path d="M1.500 1v2M4.500 1v2M.5 3.500h5v2L3.500 7h-1L.5 5.500zM3 7v5.500h2.500" fill="none" stroke="#fff" /></svg>
        <svg viewBox="0 0 16 12" className="ml-4 h-3 w-4" aria-hidden="true"><path d="M.8 8A3 3 0 0 1 3.500 5C4 2 6 1 8 1.200c1.500.2 2.500 1 3 2L6.500 6 5 9.500H3C1.500 9.500.8 9 .8 8z" fill="#fff" /><path d="M6 9.500C6 7.500 7.500 6.500 9 6.700 10 4.500 14 4.500 14.300 7.300 17 8 16 11 14.500 11H8c-1.200 0-2-.6-2-1.500z" fill="#fff" stroke="#111" strokeWidth=".6" /></svg>
        <svg viewBox="0 0 14 14" className="ml-[18px] size-[14px]" aria-hidden="true"><g fill="none" stroke="#fff" strokeWidth="1.200"><path d="M10 13a3 3 0 0 1 3-3M7 13a6 6 0 0 1 6-6M4 13a9 9 0 0 1 9-9" /><path d="M1 13A12 12 0 0 1 13 1" opacity=".65" /></g><circle cx="12" cy="12" r="1.300" fill="#fff" /></svg>
        <svg viewBox="0 0 17 14" className="ml-4 h-[14px] w-[17px]" aria-hidden="true"><path d="M1 4.500h2.500L6.500 1.500v11l-3-3H1zM8.500 5q1.500 2 0 4" fill="none" stroke="#fff" strokeWidth="1.200" /><path d="M11 3.500q2.500 3.500 0 7M13.500 2q3.500 5 0 10" fill="none" stroke="#888" /></svg>
        <svg viewBox="0 0 16 16" className="ml-5 size-4" aria-hidden="true"><path d="M6 11L10.500 2q1.500-2 2.500-.5t0 2.500L8.500 12 6 13.500zM6 8C1 7 0 9 1 11s3 3 4 2M11 8c3-2 5-1 4 0s-2 2-4 3" fill="none" stroke="#fff" strokeWidth="1.200" /></svg>
        <span className="ml-[17px]">ENG</span>
        <time className="ml-[10px] text-center leading-[18px]">4:39 PM<br />23-Feb-18</time>
        <button aria-label="6 notifications" className="ml-4 w-[26px]">
          <svg viewBox="0 0 26 26" className="size-[26px]" aria-hidden="true">
            <path d="M1 5h16v12H8l-3.500 3.500V17H1z" fill="#fff" /><path d="M4 8.500h10M4 11h10M4 13.500h7" stroke="#111" />
            <circle cx="16.500" cy="18" r="7.500" fill="#2b2b2b" stroke="#888" strokeWidth="1.200" />
            <text x="16.500" y="22" textAnchor="middle" fontSize="11" fontWeight="600" fill="#fff">6</text>
          </svg>
        </button>
        <span className="ml-[11px] h-10 w-[5px] border-l border-[#666]" />
      </div>
    </footer>
  );
}

export default function App() {
  return (
    <div className="flex min-h-screen flex-col bg-white font-['Liberation_Sans',Arial,sans-serif] text-[13px] leading-[18px] text-[#333]">
      <BrowserChrome />
      <JenkinsHeader />
      <nav aria-label="Breadcrumb" className="flex h-[26px] shrink-0 items-center border-b border-[#d3d7cf] bg-[#f6faf2] pr-[26px] pl-[18px]">
        <ol className="flex"><Crumb>Jenkins</Crumb><Crumb>asksniff</Crumb></ol>
        <a href="#refresh" className={`ml-auto text-[9px] ${link}`}>ENABLE AUTO REFRESH</a>
      </nav>
      <div className="flex grow gap-[30px] pr-[15px] pl-[15px]">
        <Sidebar />
        <Main />
      </div>
      <div className="flex h-[42px] shrink-0 items-center justify-end gap-[15px] border-t border-[#d3d7cf] bg-[#f6faf2] pr-[15px] text-xs">
        <span>Page generated: Feb 23, 2018 4:39:30 PM UTC</span>
        <a href="#api" className={link}>REST API</a>
        <a href="#version" className={link}>Jenkins ver. 2.89.4</a>
      </div>
      <Taskbar />
    </div>
  );
}
